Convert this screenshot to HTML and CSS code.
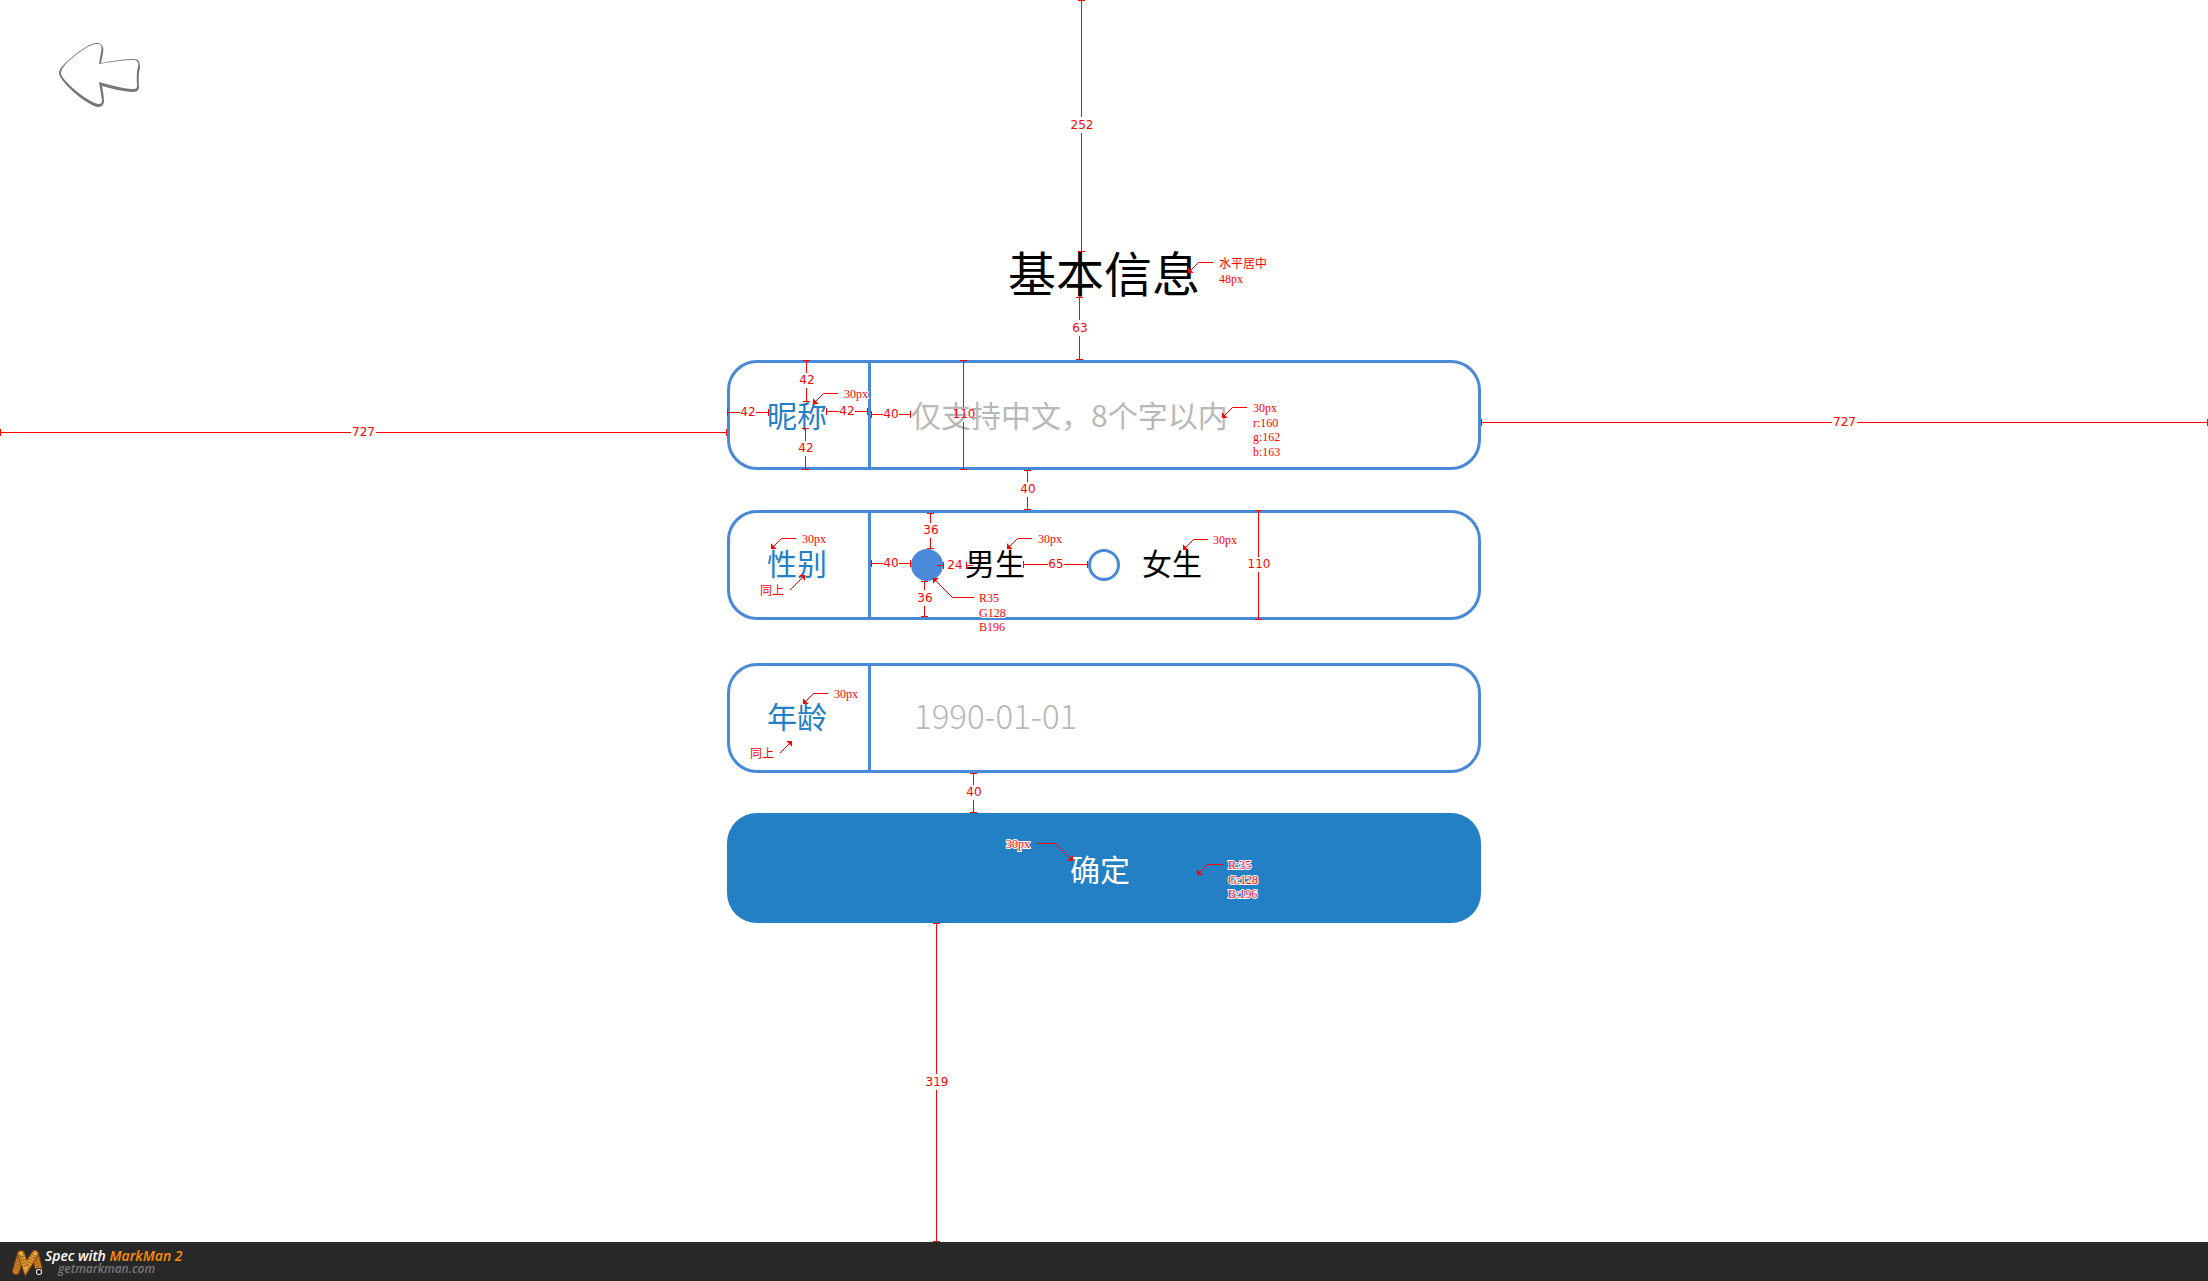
FILE: index.html
```html
<!DOCTYPE html>
<html lang="zh-CN">
<head>
<meta charset="utf-8">
<title>基本信息</title>
<link rel="stylesheet" href="styles.css">
</head>
<body>
<main class="page">
  <a class="back" href="#" aria-label="返回">
    <svg width="82" height="66" viewBox="58 42 82 66" aria-hidden="true">
      <path fill="#777" fill-rule="evenodd" d="M59 73C59 67 69 60 77 53C84 48 92 42 98 43C103 44 104 48 103 53L101 63C112 61 124 59 134 59C139 59 140 62 140 68C138 75 139 82 139 88C138 92 135 92 131 92C121 91 112 89 102 86C103 91 104 96 104 102C103 107 99 108 94 106C79 99 59 80 59 73ZM61 73C61 79 81 97 95 103C99 105 102 104 102 101C101 94 100 88 99 82C110 85 121 88 131 89C135 89 137 89 137 86C137 80 136 74 138 67C139 62 137 60 134 60C123 60 111 62 99 64L101 52C102 47 102 44 98 44C92 43 84 49 77 54C70 60 61 67 61 73Z"/>
    </svg>
  </a>
  <h1 class="title">基本信息</h1>
  <form class="form">
    <div class="field">
      <label class="label" for="nickname">昵称</label>
      <input class="input" id="nickname" type="text" placeholder="仅支持中文，8个字以内">
    </div>
    <div class="field" role="radiogroup" aria-labelledby="gender">
      <span class="label label-raised" id="gender">性别</span>
      <div class="options">
        <label class="option"><input class="radio" type="radio" name="gender" checked><span class="option-text">男生</span></label>
        <label class="option"><input class="radio" type="radio" name="gender"><span class="option-text">女生</span></label>
      </div>
    </div>
    <div class="field">
      <label class="label label-raised" for="birthday">年龄</label>
      <input class="input input-date" id="birthday" type="text" placeholder="1990-01-01">
    </div>
    <button class="submit" type="button">确定</button>

    <svg class="notes" viewBox="727 360 754 563">
      <defs>
        <marker id="head" viewBox="-5 -4 5 8" markerWidth="5" markerHeight="8" refX="0" refY="0" orient="auto" markerUnits="userSpaceOnUse"><path class="head" d="M0 0L-4-4V4Z"/></marker>
      </defs>
      <g class="ruler">
        <path d="M1078 .5h7M1081.5 0V117M1081.5 133V252M1078 251.5h7"/>
        <path d="M1076 297.5h7M1079.5 297V320M1079.5 336V360M1076 359.5h7"/>
        <path d="M803 360.5h7M806.5 360V373M806.5 388V402M803 401.5h7"/>
        <path d="M802 428.5h7M805.5 428V441M805.5 456V470M802 469.5h7"/>
        <path d="M727.5 409v7M727 412.5H740M756 412.5H769M768.5 409v7"/>
        <path d="M826.5 408v7M826 411.5H839M855 411.5H868M867.5 408v7"/>
        <path d="M871.5 411v7M871 414.5H883M899 414.5H911M910.5 411v7"/>
        <path d="M960 360.5h7M963.5 360V407M963.5 422V470M960 469.5h7"/>
        <path d="M1024 470.5h7M1027.5 470V482M1027.5 497V510M1024 509.5h7"/>
        <path d="M927 513.5h7M930.5 513V523M930.5 538V549M927 548.5h7"/>
        <path d="M921 581.5h7M924.5 581V590M924.5 606V617M921 616.5h7"/>
        <path d="M871.5 560v7M871 563.5H883M899 563.5H911M910.5 560v7"/>
        <path d="M937 565.5H944M943.5 562v7M966.5 562v7M966 565.5H973"/>
        <path d="M1023.5 561v7M1023 564.5H1048M1064 564.5H1088M1087.5 561v7"/>
        <path d="M1255 510.5h7M1258.5 510V557M1258.5 572V620M1255 619.5h7"/>
        <path d="M970 773.5h7M973.5 773V785M973.5 800V813M970 812.5h7"/>
        <path d="M933 923.5h7M936.5 923V1074M936.5 1090V1242M933 1241.5h7"/>
      </g>
      <g class="callout">
        <path d="M1213 262.5H1198.5L1188 273"/>
        <path d="M838 393.5H823.5L813 404"/>
        <path d="M1247 407.5H1232.5L1222 418"/>
        <path d="M796 538.5H781.5L771 549"/>
        <path d="M790 590L805 575"/>
        <path d="M974 597.5H952.5L933 578"/>
        <path d="M1032 538.5H1017.5L1007 549"/>
        <path d="M1208 539.5H1193.5L1183 550"/>
        <path d="M828 693.5H813.5L803 704"/>
        <path d="M780 753L792 741"/>
        <path d="M1037 843.5H1055.5L1073 861"/>
        <path d="M1223 864.5H1207.5L1197 875"/>
      </g>
      <g class="size">
        <text x="1082" y="129">252</text>
        <text x="1080" y="332">63</text>
        <text x="807" y="384">42</text>
        <text x="806" y="452">42</text>
        <text x="748" y="416">42</text>
        <text x="847" y="415">42</text>
        <text x="891" y="418">40</text>
        <text x="964" y="418">110</text>
        <text x="1028" y="493">40</text>
        <text x="931" y="534">36</text>
        <text x="925" y="602">36</text>
        <text x="891" y="567">40</text>
        <text x="955" y="569">24</text>
        <text x="1056" y="568">65</text>
        <text x="1259" y="568">110</text>
        <text x="974" y="796">40</text>
        <text x="937" y="1086">319</text>
      </g>
      <g class="remark">
        <text x="1219" y="268">水平居中</text><text x="1219" y="283">48px</text>
        <text x="844" y="398">30px</text>
        <text x="1253" y="412">30px</text><text x="1253" y="427">r:160</text><text x="1253" y="441">g:162</text><text x="1253" y="456">b:163</text>
        <text x="802" y="543">30px</text>
        <text x="760" y="595">同上</text>
        <text x="979" y="602">R35</text><text x="979" y="617">G128</text><text x="979" y="631">B196</text>
        <text x="1038" y="543">30px</text>
        <text x="1213" y="544">30px</text>
        <text x="834" y="698">30px</text>
        <text x="750" y="758">同上</text>
        <text x="1006" y="848">30px</text>
        <text x="1228" y="869">R:35</text><text x="1228" y="884">G:128</text><text x="1228" y="898">B:196</text>
      </g>
    </svg>
    <div class="margin-note margin-left"><span>727</span></div>
    <div class="margin-note margin-right"><span>727</span></div>
  </form>
</main>
<footer class="footer">
  <svg class="logo" width="34" height="32" viewBox="0 0 34 32" aria-hidden="true">
    <g fill="none" stroke-linecap="round">
      <path stroke="#7a420c" stroke-width="8" d="M5 25L10 8M24 8L28 24"/>
      <path stroke="#c67f28" stroke-width="6" d="M5 25L10 8M24 8L28 24"/>
      <path stroke="#7a420c" stroke-width="8" d="M10 8L15 22L24 8"/>
      <path stroke="#dc9634" stroke-width="6" d="M10 8L15 22L24 8"/>
      <path stroke="#a8661c" stroke-width="5" stroke-linecap="butt" stroke-dasharray="1 2" d="M5 25L10 8M10 8L15 22M15 22L24 8M24 8L28 24"/>
    </g>
    <g fill="#ffe08a"><circle cx="10" cy="8" r="1"/><circle cx="15" cy="22" r="1"/><circle cx="24" cy="8" r="1"/></g>
    <circle cx="28" cy="26" r="4" fill="#222"/><circle cx="28" cy="26" r="3" fill="#fff"/><circle cx="28" cy="26" r="2" fill="#111"/>
  </svg>
  <div class="credit">
    <div class="credit-name">Spec with <strong>MarkMan 2</strong></div>
    <div class="credit-site">getmarkman.com</div>
  </div>
</footer>
</body>
</html>
```
FILE: styles.css
```css
* { box-sizing: border-box; }

body {
  margin: 0;
  min-height: 100vh;
  display: flex;
  flex-direction: column;
  overflow-x: hidden;
  background: #fff;
  color: #000;
  font-family: "Noto Sans CJK SC", sans-serif;
  font-size: 30px;
  font-weight: 400;
}

.page {
  position: relative;
  flex: 1;
  padding: 247px 24px 0;
}

.back {
  position: absolute;
  top: 42px;
  left: 58px;
}
.back svg { display: block; }

.title {
  margin: 0 0 65px;
  font-size: 48px;
  line-height: 48px;
  font-weight: 400;
  text-align: center;
}

.form {
  position: relative;
  max-width: 754px;
  margin: 0 auto;
}

.field {
  display: flex;
  height: 110px;
  margin-bottom: 40px;
  border: 3px solid #4a88d8;
  border-radius: 30px;
}
.field + .field + .field { margin-top: 43px; }

.label {
  flex: none;
  width: 141px;
  padding-left: 37px;
  border-right: 3px solid #4a88d8;
  color: #2380c4;
  line-height: 102px;
}
.label-raised { line-height: 98px; }

.input {
  flex: 1;
  min-width: 0;
  padding: 0 40px 2px;
  border: 0;
  outline: 0;
  background: none;
  color: #000;
  font: inherit;
}
.input::placeholder { color: #b8b8b8; opacity: 1; }
.input-date {
  padding: 0 43px 6px;
  font-size: 33px;
  font-weight: 300;
}

.options {
  display: flex;
  align-items: center;
  gap: 63px;
  padding-left: 40px;
}
.option {
  display: flex;
  align-items: center;
  gap: 22px;
}
.option-text { padding-bottom: 6px; }

.radio {
  appearance: none;
  width: 32px;
  height: 32px;
  margin: 0;
  border: 3px solid #4a88d8;
  border-radius: 50%;
}
.radio:checked { background: #4a88d8; }

.submit {
  display: block;
  width: 100%;
  height: 110px;
  padding: 0 8px 0 0;
  border: 0;
  border-radius: 30px;
  background: #2380c4;
  color: #fff;
  font: inherit;
}

/* Measurement layer over the form */
.notes {
  position: absolute;
  inset: 0;
  width: 754px;
  height: 563px;
  overflow: visible;
  pointer-events: none;
}
.ruler path, .callout path { fill: none; stroke: #f00; }
.callout path { marker-end: url(#head); }
.notes .head { fill: #f00; stroke: none; marker-end: none; }

.size, .margin-note {
  color: #f00;
  font-family: "DejaVu Sans", sans-serif;
  font-size: 12px;
}
.size { fill: #f00; text-anchor: middle; }
.remark {
  fill: #f00;
  stroke: #fff;
  stroke-width: 2px;
  paint-order: stroke;
  font-family: "Liberation Serif", "Noto Sans CJK SC", serif;
  font-size: 12px;
}

.margin-note {
  position: absolute;
  width: calc(50vw - 377px);
  height: 7px;
  display: flex;
  align-items: center;
  gap: 1px;
  border: solid #f00;
  border-width: 0 1px;
  line-height: 7px;
}
.margin-note::before, .margin-note::after {
  content: "";
  flex: 1;
  height: 1px;
  background: #f00;
}
.margin-left { top: 69px; right: 100%; }
.margin-right { top: 59px; left: 100%; }

.footer {
  display: flex;
  align-items: center;
  height: 39px;
  padding-left: 11px;
  background: #282828;
  font-family: "Open Sans", sans-serif;
  font-style: italic;
}
.logo { flex: none; }
.credit-name {
  color: #fff;
  font-size: 14px;
  line-height: 14px;
  font-weight: 600;
}
.credit-name strong { color: #ff8c00; font-weight: 600; }
.credit-site {
  padding-left: 13px;
  color: #777;
  font-size: 12px;
  line-height: 12px;
  font-weight: 600;
}
```
